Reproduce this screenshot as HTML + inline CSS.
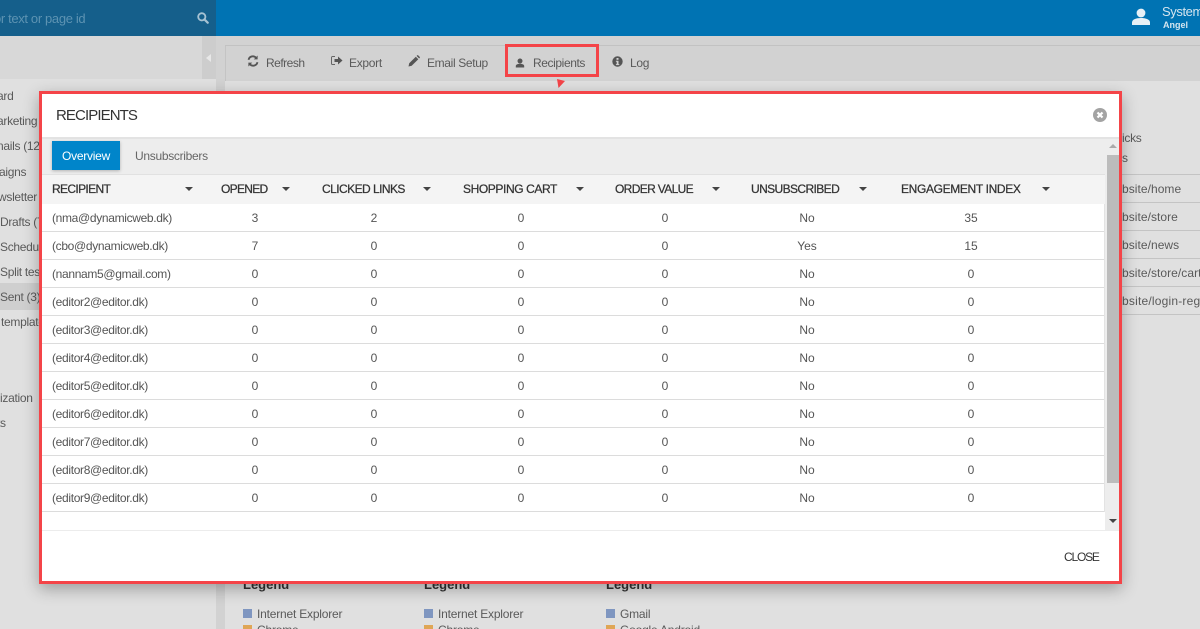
<!DOCTYPE html>
<html><head><meta charset="utf-8"><style>
html,body{margin:0;padding:0;width:1200px;height:629px;overflow:hidden}
#w{position:absolute;left:0;top:0;width:1200px;height:629px;overflow:hidden;background:#e0e0e0;font-family:"Liberation Sans",sans-serif;font-size:12px;color:#555}
.a{position:absolute}
.t{position:absolute;white-space:nowrap;line-height:16px}
.s{color:#5a5a5a;font-size:12px;letter-spacing:-.3px}
.w{letter-spacing:.05px}
.c{transform:translateX(-50%);color:#555;margin-top:1px}
.h{color:#333;font-size:12px;-webkit-text-stroke:.25px #333}
.l{position:absolute;left:42px;width:1062px;height:1px;background:#dcdcdc}
.ar{position:absolute;width:0;height:0;border-left:4px solid transparent;border-right:4px solid transparent;border-top:4px solid #444}
.em{color:#555;letter-spacing:-.33px;margin-top:1px}
</style></head><body><div id="w">
<div class="a" style="left:0;top:0;width:1200px;height:36px;background:#0073b3"></div>
<div class="a" style="left:0;top:0;width:216px;height:36px;background:#155f8b"></div>
<div class="t" style="left:-6px;top:11px;color:#5d93b2;font-size:13px;letter-spacing:-.35px">or text or page id</div>
<svg class="a" style="left:197px;top:12px" width="12" height="12" viewBox="0 0 13 13"><circle cx="5.2" cy="5.2" r="3.9" fill="none" stroke="#a6c2d3" stroke-width="2"/><path d="M8 8l3.6 3.6" stroke="#a6c2d3" stroke-width="2.4" stroke-linecap="round"/></svg>
<svg class="a" style="left:1132px;top:8px" width="18" height="18" viewBox="0 0 18 18"><circle cx="9" cy="5" r="4.4" fill="#e6f0f6"/><path d="M0 17v-2.5C0 11.5 4 10 9 10s9 1.500 9 4.500V17z" fill="#e6f0f6"/></svg>
<div class="t" style="left:1162px;top:4px;color:#d4e5ef;font-size:13px;letter-spacing:-.4px">System</div>
<div class="t" style="left:1163px;top:17px;color:#d4e5ef;font-size:9px;font-weight:bold">Angel</div>

<div class="a" style="left:0;top:36px;width:216px;height:43px;background:#d8d8d8"></div>
<div class="a" style="left:202px;top:36px;width:14px;height:43px;background:#cdcdcd"></div>
<div class="a" style="left:206px;top:54px;width:0;height:0;border-top:4px solid transparent;border-bottom:4px solid transparent;border-right:5px solid #e8e8e8"></div>
<div class="a" style="left:216px;top:36px;width:984px;height:45px;background:#d2d2d2"></div>
<div class="a" style="left:216px;top:36px;width:9px;height:593px;background:#d2d2d2"></div>
<div class="a" style="left:225px;top:45px;width:975px;height:1px;background:#c2c2c2"></div>
<div class="a" style="left:225px;top:46px;width:1px;height:35px;background:#c4c4c4"></div>
<div class="a" style="left:0;top:283px;width:39px;height:27px;background:#cfcfcf"></div>

<div class="t s" style="left:-3px;top:88px">ard</div>
<div class="t s" style="left:-3px;top:113px">arketing</div>
<div class="t s" style="left:-3px;top:138px">nails (12)</div>
<div class="t s" style="left:-1px;top:164px">aigns</div>
<div class="t s" style="left:-2px;top:189px">wsletter</div>
<div class="t s" style="left:0;top:214px">Drafts (7)</div>
<div class="t s" style="left:0;top:239px">Schedule</div>
<div class="t s" style="left:0;top:264px">Split tes</div>
<div class="t s" style="left:0;top:289px">Sent (3)</div>
<div class="t s" style="left:1px;top:314px">template</div>
<div class="t s" style="left:0;top:390px">ization</div>
<div class="t s" style="left:-3px;top:415px">ts</div>

<svg class="a" style="left:247px;top:55px" width="12" height="12" viewBox="0 0 13 13"><path d="M1.700 5.200A4.700 4.700 0 0 1 10 3.200" fill="none" stroke="#555" stroke-width="2"/><path d="M11.500.6v4.200H7.300z" fill="#555"/><path d="M11.300 7.800A4.700 4.700 0 0 1 3 9.800" fill="none" stroke="#555" stroke-width="2"/><path d="M1.500 12.400V8.200h4.200z" fill="#555"/></svg>
<div class="t s" style="left:266px;top:55px;letter-spacing:-.5px">Refresh</div>
<svg class="a" style="left:331px;top:55px" width="12" height="12" viewBox="0 0 12 12"><path d="M4 1.500H1.500a1 1 0 0 0-1 1v6a1 1 0 0 0 1 1H4" fill="none" stroke="#666" stroke-width="1"/><path d="M3.500 4h3.500V1.500L11.500 5.500 7 9.500V7H3.500z" fill="#555"/></svg>
<div class="t s" style="left:349px;top:55px">Export</div>
<svg class="a" style="left:408px;top:55px" width="12" height="12" viewBox="0 0 12 12"><path d="M.5 11.500l.7-3.200L7.800 1.700l2.500 2.500-6.600 6.600zM8.600.9l.6-.5c.3-.3.700-.3 1 0l1.500 1.500c.3.300.3.700 0 1l-.6.600z" fill="#555"/></svg>
<div class="t s" style="left:427px;top:55px;letter-spacing:-.35px">Email Setup</div>
<svg class="a" style="left:515px;top:58px" width="10" height="10" viewBox="0 0 10 10"><circle cx="5" cy="3" r="2.500" fill="#555"/><path d="M.8 9.500V8c0-1.500 2-2.300 4.200-2.300S9.200 6.500 9.200 8v1.500z" fill="#555"/></svg>
<div class="t s" style="left:533px;top:55px;letter-spacing:-.4px">Recipients</div>
<svg class="a" style="left:612px;top:56px" width="11" height="11" viewBox="0 0 11 11"><circle cx="5.500" cy="5.500" r="5.200" fill="#555"/><rect x="4.500" y="2" width="2" height="1.800" fill="#d2d2d2"/><path d="M3.900 4.700h2.600v3.400h.8v1H3.900v-1h.8V5.700h-.8z" fill="#d2d2d2"/></svg>
<div class="t s" style="left:630px;top:55px">Log</div>

<div class="a" style="left:505px;top:44px;width:88px;height:27px;border:3px solid #f44448"></div>
<svg class="a" style="left:556px;top:78px" width="10" height="11" viewBox="0 0 10 11"><path d="M1 1l8 2-6.500 7z" fill="#f44448"/></svg>

<div class="t s" style="left:1122px;top:130px">icks</div>
<div class="t s" style="left:1122px;top:150px">s</div>
<div class="a" style="left:1122px;top:174px;width:78px;height:140px;border-top:1px solid #c4c4c4;background:linear-gradient(#c4c4c4,#c4c4c4) 0 27px/100% 1px no-repeat,linear-gradient(#c4c4c4,#c4c4c4) 0 55px/100% 1px no-repeat,linear-gradient(#c4c4c4,#c4c4c4) 0 83px/100% 1px no-repeat,linear-gradient(#c4c4c4,#c4c4c4) 0 111px/100% 1px no-repeat,linear-gradient(#c4c4c4,#c4c4c4) 0 139px/100% 1px no-repeat"></div>
<div class="t s w" style="left:1122px;top:181px">bsite/home</div>
<div class="t s w" style="left:1122px;top:209px">bsite/store</div>
<div class="t s w" style="left:1122px;top:237px">bsite/news</div>
<div class="t s w" style="left:1122px;top:265px">bsite/store/cart</div>
<div class="t s w" style="left:1122px;top:293px;letter-spacing:.2px">bsite/login-reg</div>

<div class="t" style="left:243px;top:577px;font-weight:bold;color:#333;font-size:13px">Legend</div>
<div class="t" style="left:424px;top:577px;font-weight:bold;color:#333;font-size:13px">Legend</div>
<div class="t" style="left:606px;top:577px;font-weight:bold;color:#333;font-size:13px">Legend</div>
<div class="a" style="left:243px;top:609px;width:9px;height:9px;background:#7f96c0"></div>
<div class="a" style="left:243px;top:625px;width:9px;height:9px;background:#dfa656"></div>
<div class="a" style="left:424px;top:609px;width:9px;height:9px;background:#7f96c0"></div>
<div class="a" style="left:424px;top:625px;width:9px;height:9px;background:#dfa656"></div>
<div class="a" style="left:606px;top:609px;width:9px;height:9px;background:#7f96c0"></div>
<div class="a" style="left:606px;top:625px;width:9px;height:9px;background:#dfa656"></div>
<div class="t s" style="left:257px;top:606px;letter-spacing:-.2px">Internet Explorer</div>
<div class="t s" style="left:257px;top:622px;letter-spacing:-.2px">Chrome</div>
<div class="t s" style="left:438px;top:606px;letter-spacing:-.2px">Internet Explorer</div>
<div class="t s" style="left:438px;top:622px;letter-spacing:-.2px">Chrome</div>
<div class="t s" style="left:620px;top:606px;letter-spacing:-.2px">Gmail</div>
<div class="t s" style="left:620px;top:622px;letter-spacing:-.2px">Google Android</div>

<div class="a" style="left:39px;top:91px;width:1077px;height:487px;border:3px solid #f44448;background:#fff;box-shadow:0 5px 15px rgba(0,0,0,.3)"></div>
<div class="t" style="left:56px;top:107px;font-size:15px;line-height:18px;color:#333;letter-spacing:-.9px">RECIPIENTS</div>
<svg class="a" style="left:1093px;top:108px" width="14" height="14" viewBox="0 0 14 14"><circle cx="7" cy="7" r="7" fill="#a3a3a3"/><path d="M4.500 4.500l5 5M9.500 4.500l-5 5" stroke="#fff" stroke-width="2.200"/></svg>
<div class="a" style="left:42px;top:137px;width:1077px;height:2px;background:#e3e3e3"></div>
<div class="a" style="left:42px;top:139px;width:1063px;height:36px;background:#ededed"></div>
<div class="a" style="left:52px;top:141px;width:68px;height:29px;background:#0085ca;box-shadow:0 1px 3px rgba(0,0,0,.25)"></div>
<div class="t" style="left:62px;top:148px;color:#fff;letter-spacing:-.25px">Overview</div>
<div class="t" style="left:135px;top:148px;color:#666;letter-spacing:-.3px">Unsubscribers</div>
<div class="a" style="left:42px;top:174px;width:1063px;height:30px;background:#f4f4f4;border-top:1px solid #e1e1e1;box-sizing:border-box"></div>

<div class="t h" style="left:52px;top:181px;letter-spacing:-.65px">RECIPIENT</div><div class="ar" style="left:185px;top:187px"></div>
<div class="t h" style="left:221px;top:181px;letter-spacing:-.7px">OPENED</div><div class="ar" style="left:282px;top:187px"></div>
<div class="t h" style="left:322px;top:181px;letter-spacing:-.55px">CLICKED LINKS</div><div class="ar" style="left:423px;top:187px"></div>
<div class="t h" style="left:463px;top:181px;letter-spacing:-.4px">SHOPPING CART</div><div class="ar" style="left:576px;top:187px"></div>
<div class="t h" style="left:615px;top:181px;letter-spacing:-.65px">ORDER VALUE</div><div class="ar" style="left:712px;top:187px"></div>
<div class="t h" style="left:751px;top:181px;letter-spacing:-.6px">UNSUBSCRIBED</div><div class="ar" style="left:859px;top:187px"></div>
<div class="t h" style="left:901px;top:181px;letter-spacing:-.35px">ENGAGEMENT INDEX</div><div class="ar" style="left:1042px;top:187px"></div>

<div class="l" style="top:231px"></div><div class="l" style="top:259px"></div><div class="l" style="top:287px"></div><div class="l" style="top:315px"></div><div class="l" style="top:343px"></div><div class="l" style="top:371px"></div><div class="l" style="top:399px"></div><div class="l" style="top:427px"></div><div class="l" style="top:455px"></div><div class="l" style="top:483px"></div><div class="l" style="top:511px"></div>
<div class="a" style="left:1104px;top:204px;width:1px;height:308px;background:#e3e3e3"></div>
<div class="a" style="left:42px;top:530px;width:1077px;height:1px;background:#ececec"></div>

<div class="a" style="left:1105px;top:139px;width:14px;height:391px;background:#ededed"></div>
<div class="a" style="left:1107px;top:155px;width:12px;height:328px;background:#bcbcbc"></div>
<div class="a" style="left:1109px;top:144px;width:0;height:0;border-left:4px solid transparent;border-right:4px solid transparent;border-bottom:4px solid #aaa"></div>
<div class="ar" style="left:1109px;top:519px"></div>

<div class="t em" style="left:52px;top:209px">(nma@dynamicweb.dk)</div><div class="t c" style="left:255px;top:209px">3</div><div class="t c" style="left:374px;top:209px">2</div><div class="t c" style="left:521px;top:209px">0</div><div class="t c" style="left:665px;top:209px">0</div><div class="t c" style="left:807px;top:209px">No</div><div class="t c" style="left:971px;top:209px">35</div>
<div class="t em" style="left:52px;top:237px">(cbo@dynamicweb.dk)</div><div class="t c" style="left:255px;top:237px">7</div><div class="t c" style="left:374px;top:237px">0</div><div class="t c" style="left:521px;top:237px">0</div><div class="t c" style="left:665px;top:237px">0</div><div class="t c" style="left:807px;top:237px">Yes</div><div class="t c" style="left:971px;top:237px">15</div>
<div class="t em" style="left:52px;top:265px">(nannam5@gmail.com)</div><div class="t c" style="left:255px;top:265px">0</div><div class="t c" style="left:374px;top:265px">0</div><div class="t c" style="left:521px;top:265px">0</div><div class="t c" style="left:665px;top:265px">0</div><div class="t c" style="left:807px;top:265px">No</div><div class="t c" style="left:971px;top:265px">0</div>
<div class="t em" style="left:52px;top:293px">(editor2@editor.dk)</div><div class="t c" style="left:255px;top:293px">0</div><div class="t c" style="left:374px;top:293px">0</div><div class="t c" style="left:521px;top:293px">0</div><div class="t c" style="left:665px;top:293px">0</div><div class="t c" style="left:807px;top:293px">No</div><div class="t c" style="left:971px;top:293px">0</div>
<div class="t em" style="left:52px;top:321px">(editor3@editor.dk)</div><div class="t c" style="left:255px;top:321px">0</div><div class="t c" style="left:374px;top:321px">0</div><div class="t c" style="left:521px;top:321px">0</div><div class="t c" style="left:665px;top:321px">0</div><div class="t c" style="left:807px;top:321px">No</div><div class="t c" style="left:971px;top:321px">0</div>
<div class="t em" style="left:52px;top:349px">(editor4@editor.dk)</div><div class="t c" style="left:255px;top:349px">0</div><div class="t c" style="left:374px;top:349px">0</div><div class="t c" style="left:521px;top:349px">0</div><div class="t c" style="left:665px;top:349px">0</div><div class="t c" style="left:807px;top:349px">No</div><div class="t c" style="left:971px;top:349px">0</div>
<div class="t em" style="left:52px;top:377px">(editor5@editor.dk)</div><div class="t c" style="left:255px;top:377px">0</div><div class="t c" style="left:374px;top:377px">0</div><div class="t c" style="left:521px;top:377px">0</div><div class="t c" style="left:665px;top:377px">0</div><div class="t c" style="left:807px;top:377px">No</div><div class="t c" style="left:971px;top:377px">0</div>
<div class="t em" style="left:52px;top:405px">(editor6@editor.dk)</div><div class="t c" style="left:255px;top:405px">0</div><div class="t c" style="left:374px;top:405px">0</div><div class="t c" style="left:521px;top:405px">0</div><div class="t c" style="left:665px;top:405px">0</div><div class="t c" style="left:807px;top:405px">No</div><div class="t c" style="left:971px;top:405px">0</div>
<div class="t em" style="left:52px;top:433px">(editor7@editor.dk)</div><div class="t c" style="left:255px;top:433px">0</div><div class="t c" style="left:374px;top:433px">0</div><div class="t c" style="left:521px;top:433px">0</div><div class="t c" style="left:665px;top:433px">0</div><div class="t c" style="left:807px;top:433px">No</div><div class="t c" style="left:971px;top:433px">0</div>
<div class="t em" style="left:52px;top:461px">(editor8@editor.dk)</div><div class="t c" style="left:255px;top:461px">0</div><div class="t c" style="left:374px;top:461px">0</div><div class="t c" style="left:521px;top:461px">0</div><div class="t c" style="left:665px;top:461px">0</div><div class="t c" style="left:807px;top:461px">No</div><div class="t c" style="left:971px;top:461px">0</div>
<div class="t em" style="left:52px;top:489px">(editor9@editor.dk)</div><div class="t c" style="left:255px;top:489px">0</div><div class="t c" style="left:374px;top:489px">0</div><div class="t c" style="left:521px;top:489px">0</div><div class="t c" style="left:665px;top:489px">0</div><div class="t c" style="left:807px;top:489px">No</div><div class="t c" style="left:971px;top:489px">0</div>

<div class="t" style="left:1064px;top:549px;color:#333;letter-spacing:-1.2px">CLOSE</div>
</div></body></html>
